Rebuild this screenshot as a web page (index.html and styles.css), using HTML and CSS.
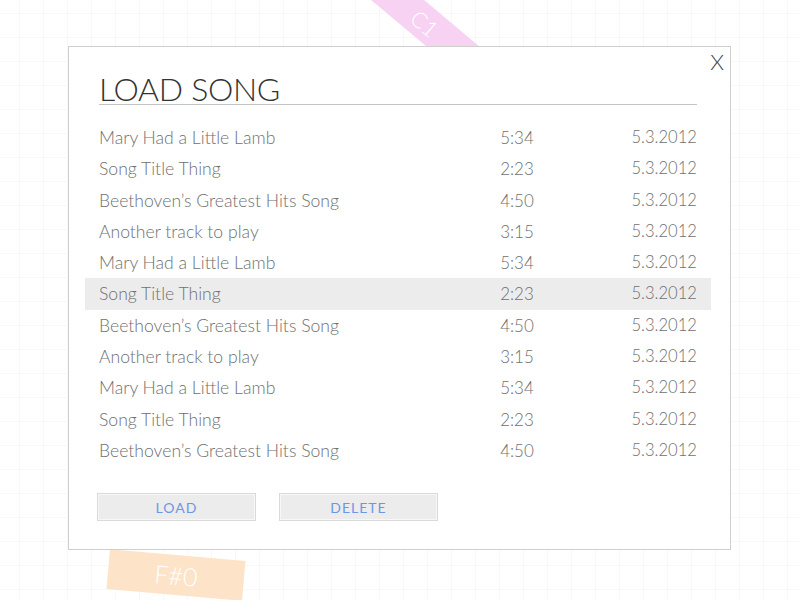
FILE: index.html
```html
<!DOCTYPE html>
<html>
<head>
<meta charset="utf-8">
<link rel="stylesheet" href="styles.css">
</head>
<body>
<div class="stage">
  <div class="note note-pink"><span>C1</span></div>
  <div class="note note-orange"><span>F#0</span></div>
  <div class="modal">
    <button class="close">X</button>
    <h1 class="title">LOAD SONG</h1>
    <ul class="songs">
      <li class="song"><span class="name">Mary Had a Little Lamb</span><span class="time">5:34</span><span class="date">5.3.2012</span></li>
      <li class="song"><span class="name">Song Title Thing</span><span class="time">2:23</span><span class="date">5.3.2012</span></li>
      <li class="song"><span class="name">Beethoven’s Greatest Hits Song</span><span class="time">4:50</span><span class="date">5.3.2012</span></li>
      <li class="song"><span class="name">Another track to play</span><span class="time">3:15</span><span class="date">5.3.2012</span></li>
      <li class="song"><span class="name">Mary Had a Little Lamb</span><span class="time">5:34</span><span class="date">5.3.2012</span></li>
      <li class="song selected"><span class="name">Song Title Thing</span><span class="time">2:23</span><span class="date">5.3.2012</span></li>
      <li class="song"><span class="name">Beethoven’s Greatest Hits Song</span><span class="time">4:50</span><span class="date">5.3.2012</span></li>
      <li class="song"><span class="name">Another track to play</span><span class="time">3:15</span><span class="date">5.3.2012</span></li>
      <li class="song"><span class="name">Mary Had a Little Lamb</span><span class="time">5:34</span><span class="date">5.3.2012</span></li>
      <li class="song"><span class="name">Song Title Thing</span><span class="time">2:23</span><span class="date">5.3.2012</span></li>
      <li class="song"><span class="name">Beethoven’s Greatest Hits Song</span><span class="time">4:50</span><span class="date">5.3.2012</span></li>
    </ul>
    <div class="actions">
      <button class="btn">LOAD</button>
      <button class="btn">DELETE</button>
    </div>
  </div>
</div>
</body>
</html>
```

FILE: styles.css
```css
html, body {
  margin: 0;
  padding: 0;
}
body {
  width: 800px;
  height: 600px;
  overflow: hidden;
  background-color: #ffffff;
  background-image:
    linear-gradient(to right, #f8f8f8 1px, transparent 1px),
    linear-gradient(to bottom, #f8f8f8 1px, transparent 1px);
  background-size: 24px 24px;
  background-position: 19px 13px;
  font-family: Lato, "Open Sans", sans-serif;
  font-weight: 300;
}
.stage {
  position: relative;
  width: 800px;
  height: 600px;
  padding-top: 46px;
  box-sizing: border-box;
}
.note {
  position: absolute;
  display: flex;
  align-items: center;
  justify-content: center;
  color: #ffffff;
  font-weight: 300;
  z-index: 0;
}
.note-pink {
  left: 350px;
  top: 6px;
  width: 150px;
  height: 34px;
  background: #f7d2f3;
  transform: rotate(40deg);
  font-size: 22px;
}
.note-orange {
  left: 108px;
  top: 555px;
  width: 136px;
  height: 40px;
  background: #fde4c9;
  transform: rotate(5deg);
  font-size: 25px;
}
.modal {
  position: relative;
  z-index: 1;
  margin-left: 68px;
  width: 663px;
  height: 504px;
  box-sizing: border-box;
  background: #ffffff;
  border: 1px solid #cfcfcf;
  padding-top: 26px;
}
.close {
  position: absolute;
  right: 6px;
  top: 4px;
  border: 0;
  background: none;
  padding: 0;
  font-family: Lato, sans-serif;
  font-weight: 300;
  font-size: 22px;
  line-height: 22px;
  color: #444;
}
.title {
  margin: 0 33px 17px 30px;
  font-size: 32px;
  line-height: 31px;
  font-weight: 300;
  color: #333333;
  letter-spacing: -0.3px;
  border-bottom: 1px solid #c4c4c4;
}
.songs {
  list-style: none;
  margin: 0 19px 0 16px;
  padding: 0;
}
.song {
  display: grid;
  grid-template-columns: 1fr 70px 145px;
  height: 31.3px;
  line-height: 31.3px;
  padding: 0 14px;
  font-size: 17.6px;
  color: #707070;
}
.song.selected {
  background: #ececec;
}
.time {
  text-align: center;
  font-size: 17px;
}
.date {
  text-align: right;
  font-size: 16.6px;
}
.actions {
  display: flex;
  gap: 23px;
  margin: 27px 0 0 28px;
}
.btn {
  width: 159px;
  height: 28px;
  box-sizing: border-box;
  background: #ececec;
  border: 1px solid #dadada;
  box-shadow: inset 0 0 0 1px #f7f7f7;
  font-family: Lato, sans-serif;
  font-weight: 400;
  font-size: 14px;
  letter-spacing: 1px;
  color: #6c97e6;
  padding: 0;
}
```
